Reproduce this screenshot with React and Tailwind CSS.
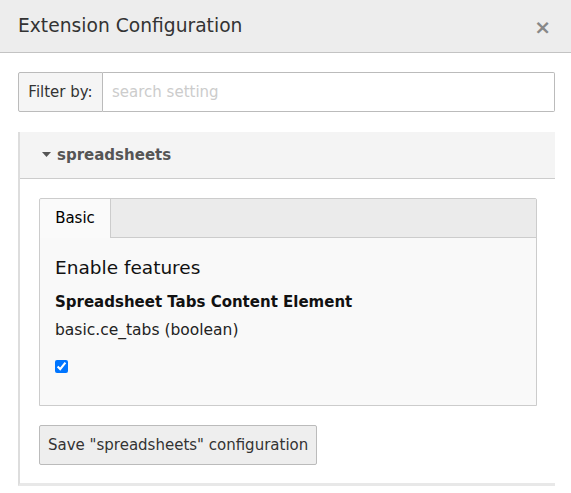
import React from "react";

export default function App() {
  return (
    <div className="w-[571px] h-[493px] bg-white overflow-hidden text-[#333]" style={{ fontFamily: '"DejaVu Sans", Verdana, sans-serif' }}>
      <div className="h-[53px] bg-[#ededed] border-b border-[#c3c3c3] flex items-center justify-between pl-[18px] pr-[20px] pt-[1px]">
        <div className="text-[18.7px] text-[#333] leading-none">Extension Configuration</div>
        <div className="text-[20px] text-[#888] font-bold leading-none">×</div>
      </div>
      <div className="px-[18px] pt-[19px]">
        <div className="flex h-[40px] w-[537px]">
          <div className="w-[85px] shrink-0 bg-[#f5f5f5] border border-[#bbb] rounded-l-[2px] flex items-center justify-center text-[15px] text-[#333]">Filter by:</div>
          <div className="flex-1 border border-l-0 border-[#bbb] rounded-r-[2px] flex items-center pl-[9px] text-[15px] text-[#ccc]">search setting</div>
        </div>
        <div className="mt-[20px] w-[537px] border-l-2 border-[#ddd] border-b-[3px] border-b-[#e8e8e8]">
          <div className="h-[47px] bg-[#f4f4f4] border-b border-[#ccc] flex items-center pl-[22px]">
            <svg width="9" height="6" viewBox="0 0 9 6" className="mr-[6px]"><path d="M0 0 L9 0 L4.5 5 Z" fill="#555" /></svg>
            <span className="font-bold text-[15px] text-[#555]">spreadsheets</span>
          </div>
          <div className="pl-[19px] pr-[18px] pt-[19px] pb-[18px]">
            <div className="border border-[#ccc] rounded-t-[2px]">
              <div className="h-[39px] bg-[#ebebeb] flex">
                <div className="w-[71px] bg-[#fafafa] border-r border-[#ccc] flex items-center justify-center text-[15px] text-[#000] rounded-tl-[2px]">Basic</div>
                <div className="flex-1 border-b border-[#ccc]" />
              </div>
              <div className="bg-[#f9f9f9] h-[167px] pl-[15px] pt-[19px]">
                <div className="text-[18.5px] text-[#111] leading-[22px]">Enable features</div>
                <div className="mt-[14px] font-bold text-[15px] text-[#111] leading-[18px]">Spreadsheet Tabs Content Element</div>
                <div className="mt-[10px] text-[15.5px] text-[#222] leading-[18px]">basic.ce_tabs (boolean)</div>
                <input type="checkbox" defaultChecked className="mt-[21px] w-[13px] h-[13px] block accent-[#0075ff]" />
              </div>
            </div>
            <button className="mt-[19px] h-[40px] px-[8px] bg-[#eee] border border-[#bbb] rounded-[2px] text-[15px] text-[#333]">Save "spreadsheets" configuration</button>
          </div>
        </div>
      </div>
    </div>
  );
}
